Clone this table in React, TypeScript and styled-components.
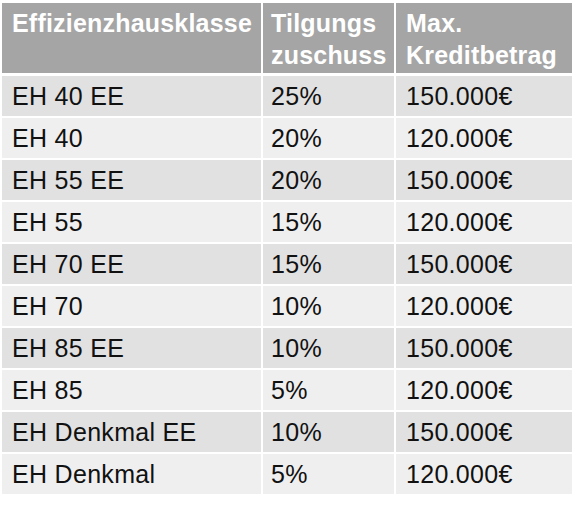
import React from "react";
import styled, { createGlobalStyle } from "styled-components";

const Global = createGlobalStyle`
  html, body { margin: 0; padding: 0; background: #ffffff; }
  body { font-family: "Liberation Sans", Arial, sans-serif; }
`;

const Page = styled.div`
  padding: 3px 0 0 2px;
`;

const Table = styled.div`
  display: grid;
  grid-template-columns: 259px 131px 176px;
  column-gap: 2px;
  row-gap: 2px;
  width: 570px;
`;

const HeadCell = styled.div<{ $pad: number }>`
  background: #a5a5a5;
  color: #ffffff;
  font-weight: 700;
  font-size: 25px;
  line-height: 32px;
  height: 70px;
  box-sizing: border-box;
  padding: 4px 0 0 ${(p) => p.$pad}px;
  margin-bottom: 1px;
  letter-spacing: 0.2px;
  white-space: nowrap;
`;

const Cell = styled.div<{ $alt: boolean; $pad: number }>`
  background: ${(p) => (p.$alt ? "#efefef" : "#e1e1e1")};
  color: #111111;
  font-size: 25px;
  letter-spacing: 0.3px;
  height: 40px;
  line-height: 41px;
  box-sizing: border-box;
  padding-left: ${(p) => p.$pad}px;
  white-space: nowrap;
`;

const rows: [string, string, string][] = [
  ["EH 40 EE", "25%", "150.000€"],
  ["EH 40", "20%", "120.000€"],
  ["EH 55 EE", "20%", "150.000€"],
  ["EH 55", "15%", "120.000€"],
  ["EH 70 EE", "15%", "150.000€"],
  ["EH 70", "10%", "120.000€"],
  ["EH 85 EE", "10%", "150.000€"],
  ["EH 85", "5%", "120.000€"],
  ["EH Denkmal EE", "10%", "150.000€"],
  ["EH Denkmal", "5%", "120.000€"],
];

const pads = [10, 8, 10];

export default function App() {
  return (
    <>
      <Global />
      <Page>
        <Table>
          <HeadCell $pad={pads[0]}>Effizienzhausklasse</HeadCell>
          <HeadCell $pad={pads[1]}>
            Tilgungs
            <br />
            zuschuss
          </HeadCell>
          <HeadCell $pad={pads[2]}>
            Max.
            <br />
            Kreditbetrag
          </HeadCell>
          {rows.map((r, i) =>
            r.map((v, j) => (
              <Cell key={`${i}-${j}`} $alt={i % 2 === 1} $pad={pads[j]}>
                {v}
              </Cell>
            ))
          )}
        </Table>
      </Page>
    </>
  );
}
